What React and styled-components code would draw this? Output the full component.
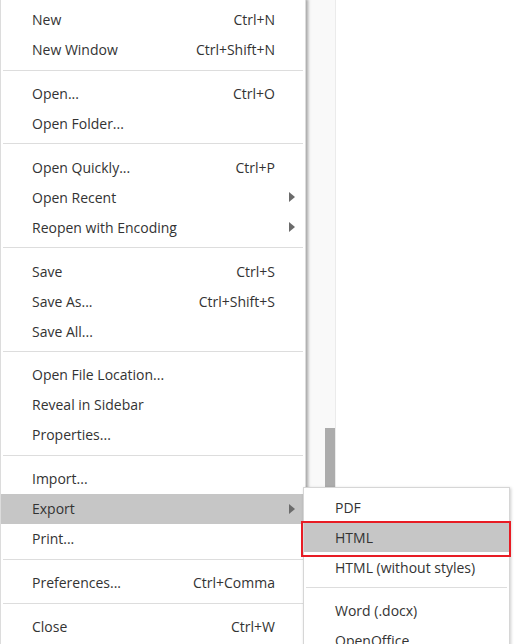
import * as React from "react";
import styled, { createGlobalStyle } from "styled-components";

const fileItems = [
  [
    { label: "New", shortcut: "Ctrl+N" },
    { label: "New Window", shortcut: "Ctrl+Shift+N" },
  ],
  [
    { label: "Open...", shortcut: "Ctrl+O" },
    { label: "Open Folder..." },
  ],
  [
    { label: "Open Quickly...", shortcut: "Ctrl+P" },
    { label: "Open Recent", submenu: true },
    { label: "Reopen with Encoding", submenu: true },
  ],
  [
    { label: "Save", shortcut: "Ctrl+S" },
    { label: "Save As...", shortcut: "Ctrl+Shift+S" },
    { label: "Save All..." },
  ],
  [
    { label: "Open File Location..." },
    { label: "Reveal in Sidebar" },
    { label: "Properties..." },
  ],
  [
    { label: "Import..." },
    { label: "Export", submenu: true, active: true },
    { label: "Print..." },
  ],
  [{ label: "Preferences...", shortcut: "Ctrl+Comma" }],
  [{ label: "Close", shortcut: "Ctrl+W" }],
];

const exportItems = [
  [
    { label: "PDF" },
    { label: "HTML", active: true, focused: true },
    { label: "HTML (without styles)" },
  ],
  [{ label: "Word (.docx)" }, { label: "OpenOffice" }],
];

function Arrow() {
  return (
    <ArrowIcon viewBox="0 0 6 10" width="6" height="10">
      <path d="M0 0 L6 5 L0 10 Z" fill="#6b6b6b" />
    </ArrowIcon>
  );
}

function MenuList({ groups, Wrapper }) {
  return (
    <Wrapper>
      {groups.map((group, gi) => (
        <React.Fragment key={gi}>
          {gi > 0 && <Separator />}
          {group.map((item) => (
            <Item key={item.label} $active={item.active} $focused={item.focused}>
              <Label>{item.label}</Label>
              {item.shortcut && <Shortcut>{item.shortcut}</Shortcut>}
              {item.submenu && <Arrow />}
            </Item>
          ))}
        </React.Fragment>
      ))}
    </Wrapper>
  );
}

function App() {
  return (
    <>
      <GlobalStyle />
      <Page>
        <MenuList groups={fileItems} Wrapper={MainMenu} />
        <ScrollTrack>
          <Thumb />
        </ScrollTrack>
        <MenuList groups={exportItems} Wrapper={SubMenu} />
      </Page>
    </>
  );
}

const GlobalStyle = createGlobalStyle`
  html, body {
    margin: 0;
    padding: 0;
    background: #ffffff;
    overflow: hidden;
  }
  body {
    font-family: "Open Sans", "Noto Sans", sans-serif;
    color: #333333;
  }
`;

const Page = styled.div`
  position: relative;
  display: flex;
  width: 515px;
  height: 644px;
  overflow: hidden;
`;

const MainMenu = styled.div`
  position: relative;
  z-index: 1;
  width: 306px;
  flex: none;
  height: 700px;
  padding-top: 4.5px;
  background: #ffffff;
  border: 1px solid #dcdcdc;
  border-top-color: #e6e6e6;
  margin-top: -1px;
  box-shadow: 2px 0 3px rgba(0, 0, 0, 0.35);
  box-sizing: border-box;
`;

const ScrollTrack = styled.div`
  position: relative;
  width: 30px;
  flex: none;
  background: #f9f9f9;
  border-right: 1px solid #ebebeb;
  box-sizing: border-box;
`;

const Thumb = styled.div`
  position: absolute;
  left: 19px;
  top: 428px;
  width: 10px;
  height: 120px;
  background: #acacac;
`;

const SubMenu = styled.div`
  position: absolute;
  z-index: 2;
  left: 303px;
  top: 487px;
  width: 207px;
  height: 200px;
  padding-top: 4px;
  background: #ffffff;
  border: 1px solid #d6d6d6;
  box-shadow: 1px 1px 3px rgba(0, 0, 0, 0.2);
  box-sizing: border-box;
`;

const Item = styled.div`
  position: relative;
  display: flex;
  align-items: center;
  height: 30px;
  padding: 0 10px 0 31px;
  font-size: 14px;
  color: #333333;
  white-space: nowrap;
  background: ${(p) => (p.$active ? "#c6c6c6" : "transparent")};

  ${(p) =>
    p.$focused &&
    `
    &::after {
      content: "";
      position: absolute;
      left: -3px;
      right: -2px;
      top: -1px;
      bottom: -5px;
      border: 2px solid #e81c24;
      pointer-events: none;
    }
  `}
`;

const Label = styled.span`
  flex: 1;
`;

const Shortcut = styled.span`
  margin-right: 20px;
`;

const ArrowIcon = styled.svg`
  position: absolute;
  right: 10px;
  top: 10px;
`;

const Separator = styled.div`
  height: 1px;
  margin: 5px 2px 7.86px 2px;
  background: #dddddd;
`;

export default App;
